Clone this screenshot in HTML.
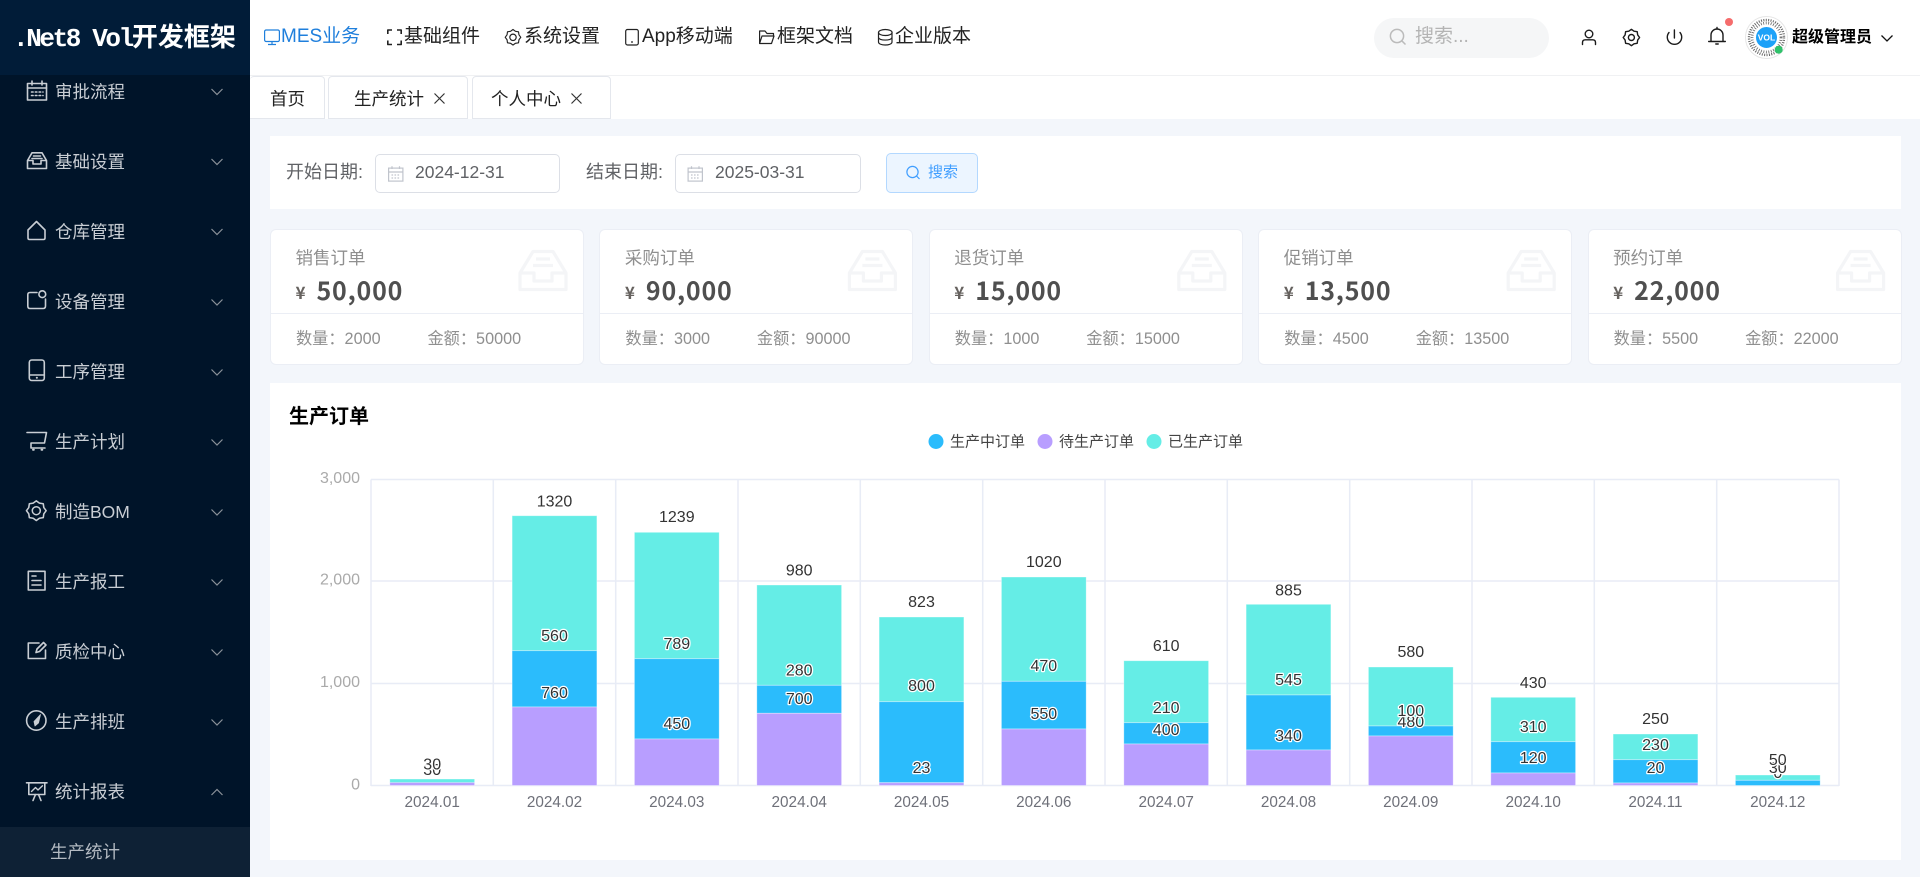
<!DOCTYPE html>
<html lang="zh-CN">
<head>
<meta charset="utf-8">
<title>.Net8 Vol</title>
<style>
html,body{margin:0;padding:0;width:1920px;height:877px;overflow:hidden;background:#f3f6fb;font-family:"Liberation Sans","Noto Sans CJK SC",sans-serif}
*{box-sizing:border-box}
.a{position:absolute}
.t{position:absolute;white-space:nowrap;line-height:24px;height:24px}
#side{left:0;top:0;width:250px;height:877px;background:#001429;overflow:hidden}
#logo{left:0;top:0;width:250px;height:75px;background:#011c38}
#head{left:250px;top:0;width:1670px;height:76px;background:#fff;border-bottom:1px solid #f0f1f3}
#tabbar{left:250px;top:76px;width:1670px;height:43px;background:#fff}
.m{left:55px;font-size:17.5px;color:#c9ced4}
.n{font-size:19px;color:#222}
.tab{position:absolute;top:76px;height:43px;background:#fff;border:1px solid #e4e7ed;border-bottom:1px solid #e4e7ed;border-radius:4px 4px 0 0}
.tabt{font-size:17.5px;color:#222}
.panel{position:absolute;background:#fff}
.inp{position:absolute;top:154px;height:39px;background:#fff;border:1px solid #dcdfe6;border-radius:5px}
.lbl{font-size:18px;color:#606266}
.val{font-size:17.5px;color:#606266}
.card{position:absolute;top:228.5px;width:314px;height:136px;background:#fff;border:1px solid #ebeef5;border-radius:6px}
.card .line{position:absolute;left:0;right:0;top:83.5px;height:1px;background:#ebeef5}
.ct{left:24.5px;top:16px;font-size:17.5px;color:#8f8f8f}
.cy{left:24.5px;top:50.5px;font-size:17px;font-weight:700;color:#66625f;font-family:"Noto Sans CJK SC",sans-serif}
.cv{left:45.5px;top:48.5px;font-size:25px;font-weight:700;color:#4f4f4f;letter-spacing:.8px;font-family:"Noto Sans CJK SC",sans-serif}
.cf{top:97.5px;font-size:16.2px;color:#8f8f8f}
svg text{font-family:"Liberation Sans","Noto Sans CJK SC",sans-serif}
.lb{font-size:16px;fill:#333;text-anchor:middle;stroke:#fff;stroke-width:2.5px;paint-order:stroke;stroke-linejoin:round}
.ax{font-size:15.3px;fill:#6e7079;text-anchor:middle}
.ay{font-size:16px;fill:#aaa;text-anchor:end}
.lg{font-size:15px;fill:#444}
</style>
</head>
<body>
<div class="a" id="side"></div>
<div class="a" style="left:0;top:827px;width:250px;height:50px;background:#0e2135"></div>
<div class="a" id="logo"></div>
<div class="a" id="head"></div>
<div class="a" id="tabbar"></div>

<!-- logo -->
<div class="a" style="left:13px;top:16px;height:40px;line-height:40px;white-space:nowrap;color:#fff;font-weight:700;font-family:'Liberation Mono','Noto Sans CJK SC',monospace;font-size:26px;letter-spacing:-2.4px">.Net8 Vol<span style="font-family:'Noto Sans CJK SC',sans-serif;font-size:26px;letter-spacing:0">开发框架</span></div>

<!-- sidebar text -->
<div class="t m" style="top:79.5px">审批流程</div>
<div class="t m" style="top:149.5px">基础设置</div>
<div class="t m" style="top:220px">仓库管理</div>
<div class="t m" style="top:290px">设备管理</div>
<div class="t m" style="top:360px">工序管理</div>
<div class="t m" style="top:430px">生产计划</div>
<div class="t m" style="top:500px">制造BOM</div>
<div class="t m" style="top:570px">生产报工</div>
<div class="t m" style="top:640px">质检中心</div>
<div class="t m" style="top:710px">生产排班</div>
<div class="t m" style="top:780px">统计报表</div>
<div class="t m" style="left:50px;top:840px;color:#b3bac2">生产统计</div>

<!-- top nav -->
<div class="t n" style="left:281px;top:25px;color:#1f7fdc">MES业务</div>
<div class="t n" style="left:404px;top:25px">基础组件</div>
<div class="t n" style="left:524px;top:25px">系统设置</div>
<div class="t n" style="left:642px;top:25px">App移动端</div>
<div class="t n" style="left:777px;top:25px">框架文档</div>
<div class="t n" style="left:895px;top:25px">企业版本</div>

<div class="a" style="left:1374px;top:18px;width:175px;height:40px;background:#f5f6f7;border-radius:20px"></div>
<div class="t" style="left:1415px;top:25px;font-size:19px;color:#b4b4b4">搜索...</div>
<div class="t" style="left:1792px;top:26px;font-size:16px;font-weight:700;color:#000">超级管理员</div>

<!-- tabs -->
<div class="tab" style="left:250px;width:75px;border-left:0"></div>
<div class="tab" style="left:328px;width:140px"></div>
<div class="tab" style="left:472px;width:139px"></div>
<div class="t tabt" style="left:270px;top:86.5px">首页</div>
<div class="t tabt" style="left:354px;top:86.5px">生产统计</div>
<div class="t tabt" style="left:491px;top:86.5px">个人中心</div>

<!-- search panel -->
<div class="panel" style="left:270px;top:136px;width:1631px;height:73px"></div>
<div class="t lbl" style="left:286px;top:160px">开始日期:</div>
<div class="inp" style="left:375px;width:185px"></div>
<div class="t val" style="left:415px;top:160px">2024-12-31</div>
<div class="t lbl" style="left:586px;top:160px">结束日期:</div>
<div class="inp" style="left:675px;width:186px"></div>
<div class="t val" style="left:715px;top:160px">2025-03-31</div>
<div class="a" style="left:886px;top:153px;width:92px;height:40px;background:#ecf5ff;border:1px solid #b3d8ff;border-radius:5px"></div>
<div class="t" style="left:928px;top:161px;font-size:15px;color:#409eff">搜索</div>

<!-- cards -->
<div class="card" style="left:270px"><div class="line"></div>
  <div class="t ct">销售订单</div><div class="t cy">¥</div><div class="t cv">50,000</div>
  <div class="t cf" style="left:25px">数量：2000</div><div class="t cf" style="left:156.5px">金额：50000</div>
</div>
<div class="card" style="left:599.4px"><div class="line"></div>
  <div class="t ct">采购订单</div><div class="t cy">¥</div><div class="t cv">90,000</div>
  <div class="t cf" style="left:25px">数量：3000</div><div class="t cf" style="left:156.5px">金额：90000</div>
</div>
<div class="card" style="left:928.8px"><div class="line"></div>
  <div class="t ct">退货订单</div><div class="t cy">¥</div><div class="t cv">15,000</div>
  <div class="t cf" style="left:25px">数量：1000</div><div class="t cf" style="left:156.5px">金额：15000</div>
</div>
<div class="card" style="left:1258.2px"><div class="line"></div>
  <div class="t ct">促销订单</div><div class="t cy">¥</div><div class="t cv">13,500</div>
  <div class="t cf" style="left:25px">数量：4500</div><div class="t cf" style="left:156.5px">金额：13500</div>
</div>
<div class="card" style="left:1587.6px"><div class="line"></div>
  <div class="t ct">预约订单</div><div class="t cy">¥</div><div class="t cv">22,000</div>
  <div class="t cf" style="left:25px">数量：5500</div><div class="t cf" style="left:156.5px">金额：22000</div>
</div>

<!-- chart panel -->
<div class="panel" style="left:270px;top:383px;width:1631px;height:477px"></div>
<div class="t" style="left:289px;top:405px;font-size:20px;font-weight:700;color:#000">生产订单</div>

<svg class="a" style="left:0;top:0" width="1920" height="877" viewBox="0 0 1920 877" fill="none">
<defs>
  <g id="inbox"><path d="M1 23 L14 1.5 H34 L47 23 V39.5 H1 Z M1 23 H15 V31 H33 V23 H47 M17 9 H31 M14 15.5 H34" stroke="#f4f5f7" stroke-width="3.2" stroke-linejoin="round"/></g>
  <path id="chev" d="M0 0 L5.5 5.5 L11 0" stroke="#8b929a" stroke-width="1.2"/>
  <g id="cal"><rect x=".6" y="2.6" width="14.3" height="13" stroke="#c0c4cc" stroke-width="1.2"/><path d="M.6 6.5 H15 M4 .8 V3.5 M11.5 .8 V3.5" stroke="#c0c4cc" stroke-width="1.2"/><path d="M3.5 9.5 H12 M3.5 12.5 H12" stroke="#c0c4cc" stroke-width="1.2" stroke-dasharray="1.6 1.4"/></g>
  <path id="gr" d="M8.2 0 L6.28 2.6 L5.8 5.8 L2.6 6.28 L0 8.2 L-2.6 6.28 L-5.8 5.8 L-6.28 2.6 L-8.2 0 L-6.28 -2.6 L-5.8 -5.8 L-2.6 -6.28 L0 -8.2 L2.6 -6.28 L5.8 -5.8 L6.28 -2.6 Z"/>
</defs>

<!-- sidebar chevrons -->
<g>
<use href="#chev" x="211.5" y="89"/><use href="#chev" x="211.5" y="159"/><use href="#chev" x="211.5" y="229"/><use href="#chev" x="211.5" y="299.5"/><use href="#chev" x="211.5" y="369.5"/><use href="#chev" x="211.5" y="439.5"/><use href="#chev" x="211.5" y="509.5"/><use href="#chev" x="211.5" y="579.5"/><use href="#chev" x="211.5" y="649.5"/><use href="#chev" x="211.5" y="719.5"/>
<path d="M211.5 795 L217 789.5 L222.5 795" stroke="#8b929a" stroke-width="1.2"/>
</g>

<!-- sidebar icons -->
<g stroke="#c9ced4" stroke-width="1.6" stroke-linejoin="round" stroke-linecap="round">
  <!-- calendar -->
  <rect x="27.5" y="83.5" width="19" height="16.5"/><path d="M27.5 88 H46.5 M32 81 V85 M42 81 V85"/><path d="M31.5 92 H43 M31.5 95.5 H43" stroke-dasharray="1.6 2.2"/>
  <!-- inbox -->
  <path d="M27.5 160.5 L32 152.8 H42 L46.5 160.5 V168.5 H27.5 Z M27.5 160.5 H33 V164 H41 V160.5 H46.5 M33.5 156 H40.5 M32 158.5 H42"/>
  <!-- home -->
  <path d="M28 230 L36.5 221.5 L45 230 V238 Q45 239.5 43.5 239.5 H29.5 Q28 239.5 28 238 Z"/>
  <!-- device -->
  <path d="M37 292.5 H30 Q27.8 292.5 27.8 294.7 V306 Q27.8 308.5 30 308.5 H43 Q45.5 308.5 45.5 306 V299"/><circle cx="42.3" cy="294.2" r="3.4"/>
  <!-- phone -->
  <rect x="29.3" y="360" width="15" height="20.5" rx="2.5"/><path d="M29.3 375 H44.3"/><path d="M36.8 377.8 H36.9" stroke-width="2"/>
  <!-- cart -->
  <path d="M27 432.5 H46.5 L44.5 443 H31 V448 H45"/><path d="M33 449.8 H33.8 M41.5 449.8 H42.3" stroke-width="2"/>
  <!-- gear -->
  <use href="#gr" transform="translate(36.3 510.7) scale(1.2)" stroke-width="1.3"/><circle cx="36.3" cy="510.7" r="4" stroke-width="1.5"/>
  <!-- doc -->
  <rect x="28.3" y="571.3" width="16.7" height="18.7"/><path d="M32 576 H36 M32 580.5 H41 M32 585 H41"/>
  <!-- edit -->
  <path d="M39 643 H28.3 V658.5 H45.5 V650"/><path d="M36 652.5 L37 649 L43.5 642.5 L46 645 L39.5 651.5 Z"/>
  <!-- compass -->
  <circle cx="36.3" cy="720.5" r="9.7"/><path d="M40.5 714.5 L38.5 723 L35 726 L34 721.5 Z" fill="#c9ced4" stroke-width=".8"/>
  <!-- chart board -->
  <path d="M26.5 782.8 H47 M28.8 782.8 V794.5 H44.8 V782.8 M33 800.5 L35.5 794.5 M41 800.5 L38.5 794.5"/><path d="M31.5 791.5 L35.5 787.5 L38 790 L42.5 785.8" stroke-width="1.4"/>
</g>

<!-- top nav icons -->
<g stroke="#1f7fdc" stroke-width="1.2" stroke-linejoin="round"><rect x="264.6" y="30" width="14.8" height="11.5" rx="1.5"/><path d="M268 44.5 H276 M272 41.5 V44.5"/></g>
<g stroke="#222" stroke-width="1.2" stroke-linejoin="round">
  <path d="M392 30 H387.8 V34 M397 30 H401.2 V34 M392 44.5 H387.8 V40.5 M397 44.5 H401.2 V40.5" stroke-width="1.6"/>
  <circle cx="513" cy="37.3" r="3.2"/><use href="#gr" transform="translate(513 37.3) scale(.95)"/>
  <rect x="625.7" y="29.5" width="12.6" height="15.5" rx="1.8"/><path d="M631 42 H633"/>
  <path d="M759.6 43.5 V31 H765 L767 33.5 H773.5 V36 M759.6 43.5 L762 36 H774 L771.5 43.5 Z"/>
  <ellipse cx="885.3" cy="32.5" rx="6.8" ry="3"/><path d="M878.5 32.5 V42 C878.5 46 892 46 892 42 V32.5 M878.5 37.3 C878.5 41 892 41 892 37.3"/>
</g>

<!-- header right icons -->
<circle cx="1397" cy="36" r="6.6" stroke="#bbb" stroke-width="1.5"/><path d="M1401.8 40.8 L1405.5 44.5" stroke="#bbb" stroke-width="1.5"/>
<g stroke="#1b1b1b" stroke-width="1.4" stroke-linecap="round" stroke-linejoin="round">
  <circle cx="1589" cy="34" r="3.8"/><path d="M1582.5 44.5 V42.5 Q1582.5 39.8 1585.3 39.8 H1592.7 Q1595.5 39.8 1595.5 42.5 V44.5"/>
  <circle cx="1631.4" cy="37.5" r="3"/><use href="#gr" transform="translate(1631.4 37.5)"/>
  <path d="M1669 32.5 A7.2 7.2 0 1 0 1680 32.5 M1674.4 30 V38"/>
  <path d="M1711 41.5 V35 A6 6 0 0 1 1723 35 V41.5 M1708.7 41.5 H1725.3"/><path d="M1717 27.5 V29 M1715.8 44 H1718.2"/>
</g>
<circle cx="1729" cy="22" r="4" fill="#f56c6c"/>
<!-- avatar -->
<circle cx="1766.5" cy="37.5" r="21" fill="#fff" stroke="#e6e6e6" stroke-width="1"/>
<circle cx="1766.5" cy="37.5" r="17.5" stroke="#666" stroke-width="2.4" stroke-dasharray="1 1.4"/>
<circle cx="1766.5" cy="37.5" r="14.5" stroke="#666" stroke-width="2.8" stroke-dasharray=".8 1.7"/>
<circle cx="1766.5" cy="37.5" r="11" fill="#1da1f8" stroke="#fff" stroke-width="1"/>
<text x="1766.5" y="40.5" text-anchor="middle" fill="#fff" font-size="8.5" font-weight="700">VOL</text>
<circle cx="1778.7" cy="49.7" r="4" fill="#2fc26b"/>
<path d="M1881.5 35.5 L1887 41 L1892.5 35.5" stroke="#111" stroke-width="1.3"/>

<!-- tab close -->
<g stroke="#333" stroke-width="1.2"><path d="M434.5 93.5 L444.5 103.5 M444.5 93.5 L434.5 103.5"/><path d="M571.5 93.5 L581.5 103.5 M581.5 93.5 L571.5 103.5"/></g>

<!-- form icons -->
<use href="#cal" x="388" y="165.5"/><use href="#cal" x="687.5" y="165.5"/>
<circle cx="912.5" cy="172" r="5.6" stroke="#409eff" stroke-width="1.2"/><path d="M916.5 176 L919.5 179" stroke="#409eff" stroke-width="1.2"/>

<!-- card icons -->
<use href="#inbox" x="519" y="250"/><use href="#inbox" x="848.4" y="250"/><use href="#inbox" x="1177.8" y="250"/><use href="#inbox" x="1507.2" y="250"/><use href="#inbox" x="1836.6" y="250"/>

<!-- legend -->
<circle cx="936" cy="441.5" r="7.5" fill="#2bbcfc"/><text class="lg" x="950" y="446.5">生产中订单</text>
<circle cx="1045" cy="441.5" r="7.5" fill="#b89eff"/><text class="lg" x="1059" y="446.5">待生产订单</text>
<circle cx="1154" cy="441.5" r="7.5" fill="#65ede6"/><text class="lg" x="1168" y="446.5">已生产订单</text>

<!-- grid -->
<g stroke="#e8ecf6" stroke-width="1.5">
  <path d="M371 479.5 H1839 M371 581 H1839 M371 683.5 H1839 M371 785.5 H1839"/>
  <path d="M371 479.5 V786 M493.3 479.5 V786 M615.7 479.5 V786 M738 479.5 V786 M860.3 479.5 V786 M982.7 479.5 V786 M1105 479.5 V786 M1227.3 479.5 V786 M1349.7 479.5 V786 M1472 479.5 V786 M1594.3 479.5 V786 M1716.7 479.5 V786 M1839 479.5 V786"/>
</g>
<g>
  <text class="ay" x="360" y="483">3,000</text><text class="ay" x="360" y="584.5">2,000</text><text class="ay" x="360" y="687">1,000</text><text class="ay" x="360" y="789.5">0</text>
</g>

<!-- bars -->
<g stroke="#fff" stroke-opacity=".45" stroke-width=".8">
  <g fill="#65ede6">
    <rect x="389.8" y="779" width="84.8" height="4"/>
    <rect x="512.1" y="515.7" width="84.8" height="135"/>
    <rect x="634.4" y="532.3" width="84.8" height="126.4"/>
    <rect x="756.8" y="585" width="84.8" height="100.3"/>
    <rect x="879.1" y="617" width="84.8" height="84.7"/>
    <rect x="1001.4" y="577" width="84.8" height="104.3"/>
    <rect x="1123.8" y="660.7" width="84.8" height="62"/>
    <rect x="1246.1" y="604.3" width="84.8" height="90.7"/>
    <rect x="1368.4" y="667" width="84.8" height="59"/>
    <rect x="1490.8" y="697.3" width="84.8" height="44.4"/>
    <rect x="1613.1" y="734" width="84.8" height="25.7"/>
    <rect x="1735.4" y="775" width="84.8" height="5.3"/>
  </g>
  <g fill="#2bbcfc">
    <rect x="512.1" y="650.7" width="84.8" height="56.3"/>
    <rect x="634.4" y="658.7" width="84.8" height="80.3"/>
    <rect x="756.8" y="685.3" width="84.8" height="28"/>
    <rect x="879.1" y="701.7" width="84.8" height="81"/>
    <rect x="1001.4" y="681.3" width="84.8" height="47.7"/>
    <rect x="1123.8" y="722.7" width="84.8" height="21.3"/>
    <rect x="1246.1" y="695" width="84.8" height="55"/>
    <rect x="1368.4" y="726" width="84.8" height="10"/>
    <rect x="1490.8" y="741.7" width="84.8" height="31.3"/>
    <rect x="1613.1" y="759.7" width="84.8" height="23.3"/>
    <rect x="1735.4" y="780.3" width="84.8" height="5.2"/>
  </g>
  <g fill="#b89eff">
    <rect x="389.8" y="782.5" width="84.8" height="3"/>
    <rect x="512.1" y="707" width="84.8" height="78.5"/>
    <rect x="634.4" y="739" width="84.8" height="46.5"/>
    <rect x="756.8" y="713.3" width="84.8" height="72.2"/>
    <rect x="879.1" y="782.7" width="84.8" height="2.8"/>
    <rect x="1001.4" y="729" width="84.8" height="56.5"/>
    <rect x="1123.8" y="744" width="84.8" height="41.5"/>
    <rect x="1246.1" y="750" width="84.8" height="35.5"/>
    <rect x="1368.4" y="736" width="84.8" height="49.5"/>
    <rect x="1490.8" y="773" width="84.8" height="12.5"/>
    <rect x="1613.1" y="783" width="84.8" height="2.5"/>
  </g>
</g>

<!-- labels (baseline = centre + 5.5) -->
<g>
  <text class="lb" x="432.2" y="775">30</text><text class="lb" x="432.2" y="769.5">30</text>
  <text class="lb" x="554.5" y="506.5">1320</text><text class="lb" x="554.5" y="641">560</text><text class="lb" x="554.5" y="698">760</text>
  <text class="lb" x="676.8" y="522">1239</text><text class="lb" x="676.8" y="649">789</text><text class="lb" x="676.8" y="729">450</text>
  <text class="lb" x="799.2" y="575.5">980</text><text class="lb" x="799.2" y="675.5">280</text><text class="lb" x="799.2" y="704">700</text>
  <text class="lb" x="921.5" y="607">823</text><text class="lb" x="921.5" y="691">800</text><text class="lb" x="921.5" y="773">23</text>
  <text class="lb" x="1043.8" y="567">1020</text><text class="lb" x="1043.8" y="671">470</text><text class="lb" x="1043.8" y="719">550</text>
  <text class="lb" x="1166.2" y="651">610</text><text class="lb" x="1166.2" y="713">210</text><text class="lb" x="1166.2" y="735">400</text>
  <text class="lb" x="1288.5" y="595.5">885</text><text class="lb" x="1288.5" y="685">545</text><text class="lb" x="1288.5" y="741">340</text>
  <text class="lb" x="1410.8" y="657">580</text><text class="lb" x="1410.8" y="727">480</text><text class="lb" x="1410.8" y="716">100</text>
  <text class="lb" x="1533.2" y="688">430</text><text class="lb" x="1533.2" y="732">310</text><text class="lb" x="1533.2" y="763">120</text>
  <text class="lb" x="1655.5" y="724">250</text><text class="lb" x="1655.5" y="750">230</text><text class="lb" x="1655.5" y="773">20</text>
  <text class="lb" x="1777.8" y="778">0</text><text class="lb" x="1777.8" y="773">30</text><text class="lb" x="1777.8" y="765">50</text>
</g>

<!-- x axis -->
<g>
  <text class="ax" x="432.2" y="807">2024.01</text><text class="ax" x="554.5" y="807">2024.02</text><text class="ax" x="676.8" y="807">2024.03</text><text class="ax" x="799.2" y="807">2024.04</text><text class="ax" x="921.5" y="807">2024.05</text><text class="ax" x="1043.8" y="807">2024.06</text><text class="ax" x="1166.2" y="807">2024.07</text><text class="ax" x="1288.5" y="807">2024.08</text><text class="ax" x="1410.8" y="807">2024.09</text><text class="ax" x="1533.2" y="807">2024.10</text><text class="ax" x="1655.5" y="807">2024.11</text><text class="ax" x="1777.8" y="807">2024.12</text>
</g>
</svg>
</body>
</html>
